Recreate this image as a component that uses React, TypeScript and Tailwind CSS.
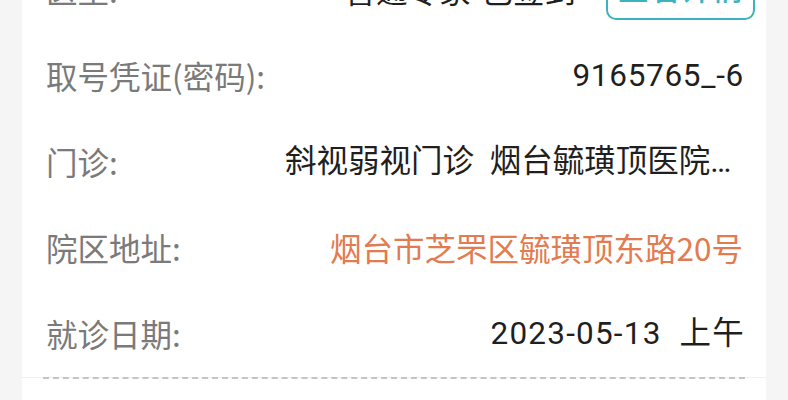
import React from 'react';

const rows = [
  { label: '取号凭证(密码):', value: '9165765_-6', latin: 'tracking-[0.7px] -mr-[1px]' },
  { label: '门诊:', value: '斜视弱视门诊\u00a0\u00a0烟台毓璜顶医院莱山院区', latin: '' },
  { label: '院区地址:', value: '烟台市芝罘区毓璜顶东路20号', accent: true, latin: '' },
  { label: '就诊日期:', value: '2023-05-13\u00a0\u00a0上午', latin: 'tracking-[1.2px] -mr-[2px]' },
];

export default function App() {
  return (
    <div
      className="w-[788px] h-[400px] overflow-hidden bg-[#f5f5f5]"
      style={{ fontFamily: "'Noto Sans CJK SC', Roboto, sans-serif" }}
    >
      <div className="mx-[22px] w-[744px] bg-white -mt-[53px] h-[460px]">
        <div className="h-[86px] flex items-center justify-between pl-[24px] pr-[11px]">
          <span className="text-[31.5px] text-[#7a7a7a]">医生:</span>
          <div className="flex items-center gap-[30px]">
            <span className="text-[31.5px] text-[#1f1f1f]">普通专家-已签到</span>
            <button className="w-[149px] h-[60px] rounded-[10px] border-2 border-[#3bb3bf] text-[31.5px] font-medium text-[#3bb3bf] flex items-center justify-center pb-[6px]">
              查看详情
            </button>
          </div>
        </div>
        {rows.map((r) => (
          <div key={r.label} className="h-[86px] flex items-center justify-between gap-6 pl-[24px] pr-[23px]">
            <span className="text-[31.5px] text-[#7a7a7a] whitespace-nowrap shrink-0">{r.label}</span>
            <span
              className={`text-[31.5px] whitespace-nowrap overflow-hidden text-ellipsis min-w-0 max-w-[458px] ${r.latin} ${
                r.accent ? 'text-[#e27b50]' : 'text-[#1f1f1f]'
              }`}
              style={r.accent ? undefined : { fontFamily: "Roboto, 'Noto Sans CJK SC', sans-serif" }}
            >
              {r.value}
            </span>
          </div>
        ))}
        <div className="border-t border-[#f0f0f0]">
          <div className="mx-[21px] -mt-px border-t-2 border-dashed border-[#c4c4c4]" />
        </div>
      </div>
    </div>
  );
}
